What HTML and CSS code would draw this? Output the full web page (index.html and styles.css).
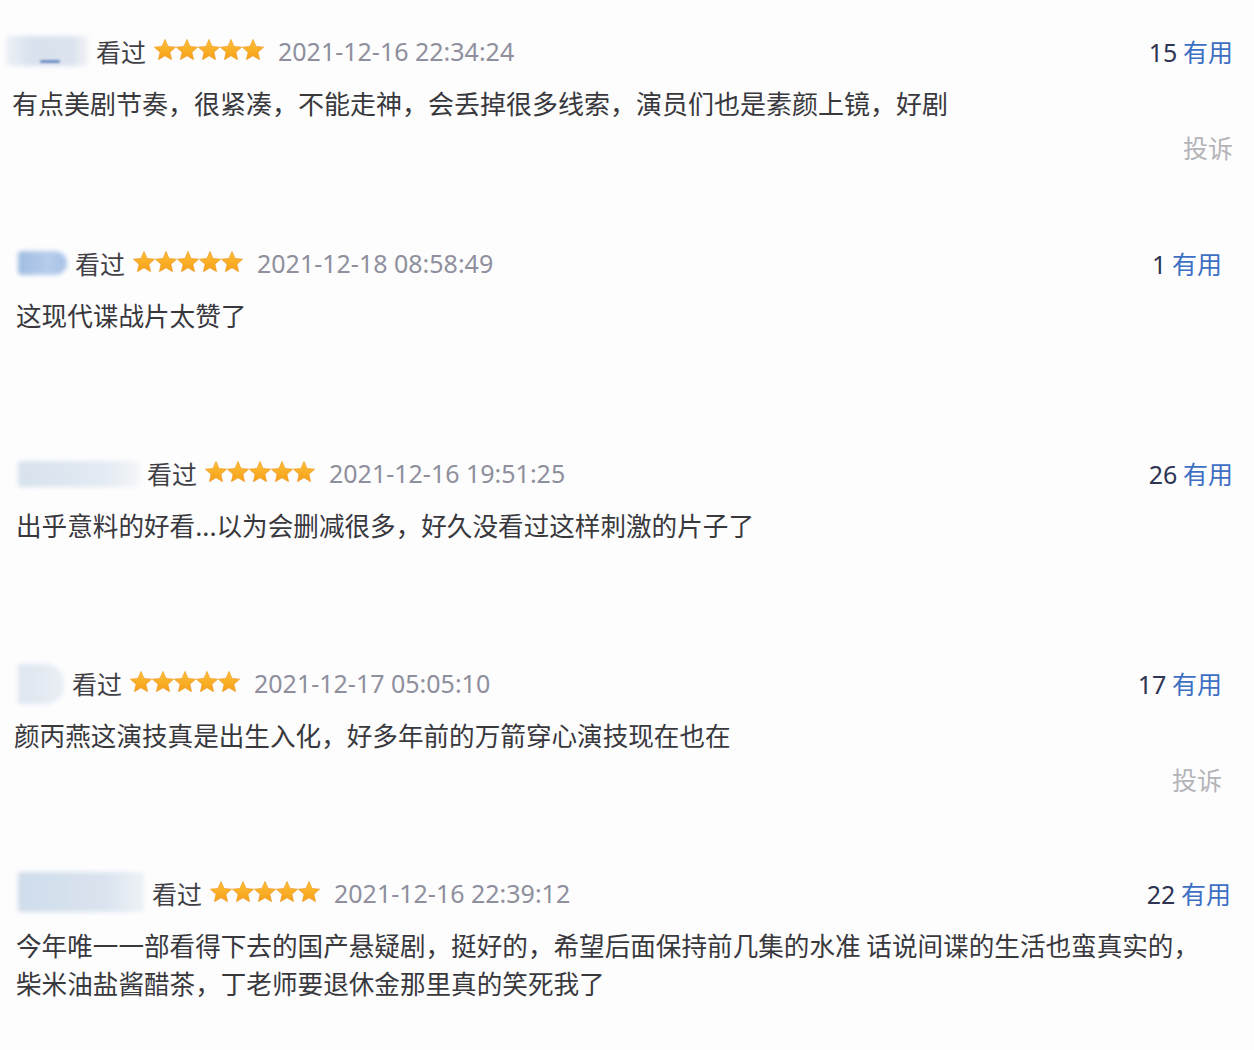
FILE: index.html
```html
<!DOCTYPE html>
<html lang="zh-CN">
<head>
<meta charset="utf-8">
<title>短评</title>
<link rel="stylesheet" href="styles.css">
</head>
<body>
<div class="list">

  <div class="comment c1">
    <div class="head">
      <div class="meta">
        <span class="user u1"><span class="blot"></span><span class="blot dark"></span></span>
        <span class="seen">看过</span>
        <svg class="stars" viewBox="0 0 110 22"><use href="#s" x="0"/><use href="#s" x="22"/><use href="#s" x="44"/><use href="#s" x="66"/><use href="#s" x="88"/></svg>
        <span class="time">2021-12-16 22:34:24</span>
      </div>
      <div class="votes"><span class="num">15</span> <span class="useful">有用</span></div>
    </div>
    <p class="text">有点美剧节奏，很紧凑，不能走神，会丢掉很多线索，演员们也是素颜上镜，好剧</p>
    <div class="report">投诉</div>
  </div>

  <div class="comment c2">
    <div class="head">
      <div class="meta">
        <span class="user u2"><span class="blot"></span></span>
        <span class="seen">看过</span>
        <svg class="stars" viewBox="0 0 110 22"><use href="#s" x="0"/><use href="#s" x="22"/><use href="#s" x="44"/><use href="#s" x="66"/><use href="#s" x="88"/></svg>
        <span class="time">2021-12-18 08:58:49</span>
      </div>
      <div class="votes"><span class="num">1</span> <span class="useful">有用</span></div>
    </div>
    <p class="text">这现代谍战片太赞了</p>
  </div>

  <div class="comment c3">
    <div class="head">
      <div class="meta">
        <span class="user u3"><span class="blot"></span></span>
        <span class="seen">看过</span>
        <svg class="stars" viewBox="0 0 110 22"><use href="#s" x="0"/><use href="#s" x="22"/><use href="#s" x="44"/><use href="#s" x="66"/><use href="#s" x="88"/></svg>
        <span class="time">2021-12-16 19:51:25</span>
      </div>
      <div class="votes"><span class="num">26</span> <span class="useful">有用</span></div>
    </div>
    <p class="text">出乎意料的好看...以为会删减很多，好久没看过这样刺激的片子了</p>
  </div>

  <div class="comment c4">
    <div class="head">
      <div class="meta">
        <span class="user u4"><span class="blot"></span></span>
        <span class="seen">看过</span>
        <svg class="stars" viewBox="0 0 110 22"><use href="#s" x="0"/><use href="#s" x="22"/><use href="#s" x="44"/><use href="#s" x="66"/><use href="#s" x="88"/></svg>
        <span class="time">2021-12-17 05:05:10</span>
      </div>
      <div class="votes"><span class="num">17</span> <span class="useful">有用</span></div>
    </div>
    <p class="text">颜丙燕这演技真是出生入化，好多年前的万箭穿心演技现在也在</p>
    <div class="report">投诉</div>
  </div>

  <div class="comment c5">
    <div class="head">
      <div class="meta">
        <span class="user u5"><span class="blot"></span></span>
        <span class="seen">看过</span>
        <svg class="stars" viewBox="0 0 110 22"><use href="#s" x="0"/><use href="#s" x="22"/><use href="#s" x="44"/><use href="#s" x="66"/><use href="#s" x="88"/></svg>
        <span class="time">2021-12-16 22:39:12</span>
      </div>
      <div class="votes"><span class="num">22</span> <span class="useful">有用</span></div>
    </div>
    <p class="text">今年唯一一部看得下去的国产悬疑剧，挺好的，希望后面保持前几集的水准 话说间谍的生活也蛮真实的，<br>柴米油盐酱醋茶，丁老师要退休金那里真的笑死我了</p>
  </div>

</div>

<svg class="defs" width="0" height="0">
  <defs>
    <linearGradient id="g" x1="0" y1="0" x2="0" y2="1">
      <stop offset="0" stop-color="#fdbf35"/>
      <stop offset="1" stop-color="#f6a01a"/>
    </linearGradient>
    <polygon id="s" fill="url(#g)" stroke="#ec9418" stroke-width="0.6" stroke-linejoin="round" points="11,0.4 14.06,7.39 21.65,8.14 15.95,13.21 17.58,20.66 11,16.8 4.42,20.66 6.05,13.21 0.35,8.14 7.94,7.39"/>
  </defs>
</svg>
</body>
</html>
```

FILE: styles.css
```css
html, body {
  margin: 0;
  padding: 0;
  background: #fdfdfe;
}

body {
  font-family: "Noto Sans CJK SC", "Noto Sans", sans-serif;
  color: #3a3a3e;
}

.defs {
  position: absolute;
  width: 0;
  height: 0;
}

.list {
  padding-top: 33px;
  width: 1254px;
}

.comment {
  box-sizing: border-box;
  height: 210px;
  padding-left: 18px;
}

.c1 { height: 212px; padding-left: 0; padding-right: 21px; }
.c2 { padding-right: 32px; }
.c3 { padding-right: 21px; }
.c4 { padding-right: 32px; }
.c5 { padding-right: 23px; }

.head {
  display: flex;
  align-items: center;
  justify-content: space-between;
  height: 36px;
}

.meta {
  display: flex;
  align-items: center;
}

.user {
  position: relative;
  height: 36px;
  margin-right: 8px;
}

.blot {
  position: absolute;
  left: 0;
  right: 0;
  top: 6px;
  bottom: 6px;
  background: #dde5ef;
  filter: blur(2px);
  border-radius: 3px;
}

.u1 { width: 88px; }
.u1 .blot { top: 3px; bottom: 3px; left: 6px; background: linear-gradient(90deg, #eef1f5, #d9e2ee 30%, #dbe3ee 80%, #f1f3f6); }
.u1 .blot.dark { top: 27px; bottom: 6px; left: 40px; right: 28px; background: #6f8fc4; filter: blur(1px); }

.u2 { width: 49px; }
.u2 .blot { top: 6px; bottom: 6px; background: linear-gradient(90deg, #9fbde2, #b6cdea 60%, #a9c3e6); border-radius: 4px 12px 12px 4px; }

.u3 { width: 121px; }
.u3 .blot { top: 6px; bottom: 4px; background: linear-gradient(90deg, #d7e2ee, #e3eaf2 70%, #f3f5f8); }

.u4 { width: 46px; }
.u4 .blot { top: -1px; bottom: -3px; background: linear-gradient(90deg, #dfe6ef, #e9eef4); border-radius: 2px 18px 18px 2px; }

.u5 { width: 126px; }
.u5 .blot { top: -3px; bottom: -1px; background: linear-gradient(90deg, #cfdcea, #dae4ef 70%, #eef2f6); }

.seen {
  font-size: 25px;
  line-height: 36px;
  color: #404046;
  margin-right: 8px;
}

.stars {
  width: 110px;
  height: 22px;
  margin-right: 14px;
  margin-top: -2px;
}

.time {
  font-family: "Noto Sans", "Roboto", sans-serif;
  font-size: 25px;
  line-height: 36px;
  color: #8f8f9d;
}

.votes {
  font-size: 25px;
  line-height: 36px;
  white-space: nowrap;
}

.num {
  font-family: "Noto Sans", "Roboto", sans-serif;
  font-size: 25px;
  color: #2e3452;
}

.useful {
  color: #3d6fc3;
}

.text {
  margin: 15px 0 0 -2px;
  font-size: 25.6px;
  line-height: 38px;
  color: #38383d;
}

.c1 .text { margin-left: 12px; font-size: 26px; }
.c4 .text { margin-left: -4px; }

.report {
  margin-top: 6px;
  text-align: right;
  font-size: 25px;
  line-height: 38px;
  color: #b3b3b8;
}
```
